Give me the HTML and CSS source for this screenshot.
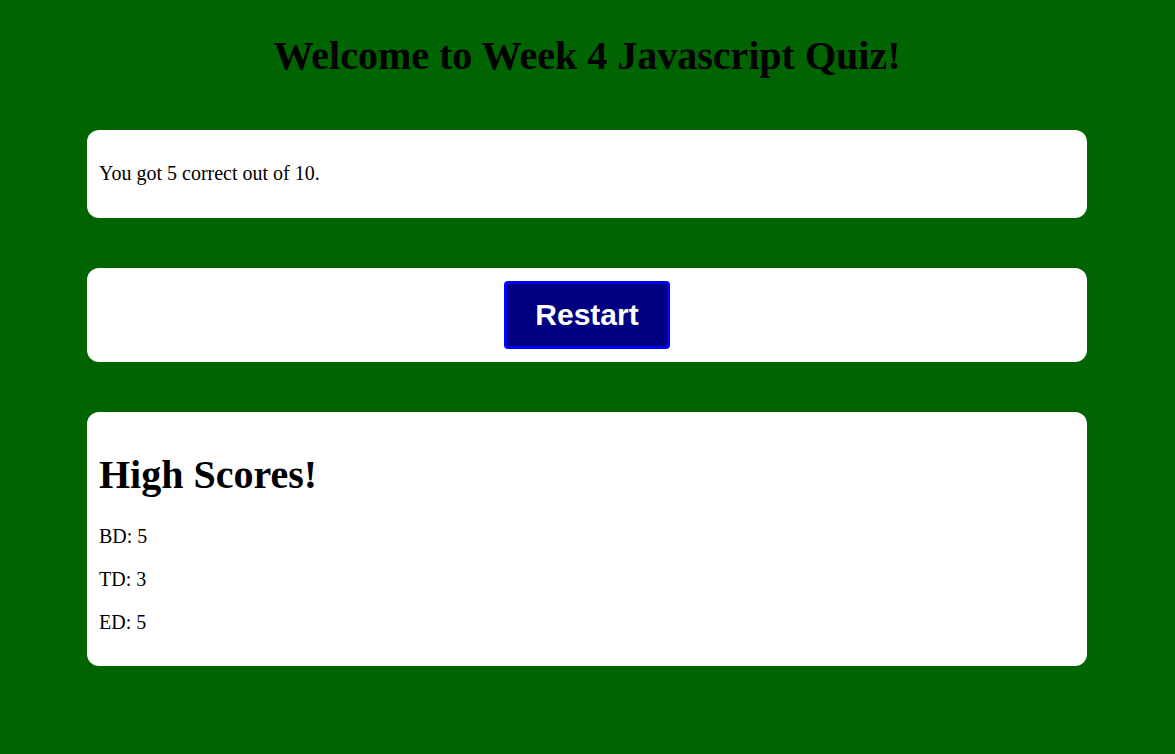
FILE: index.html
```html
<!DOCTYPE html>
<html>
<head>
<meta charset="utf-8">
<title>Week 4 Javascript Quiz</title>
<link rel="stylesheet" href="styles.css">
</head>
<body>
  <h1 class="title">Welcome to Week 4 Javascript Quiz!</h1>
  <main class="quiz">
    <section class="card card-result">
      <p class="text">You got 5 correct out of 10.</p>
    </section>
    <section class="card card-actions">
      <button class="btn">Restart</button>
    </section>
    <section class="card">
      <h2 class="scores-title">High Scores!</h2>
      <p class="text">BD: 5</p>
      <p class="text">TD: 3</p>
      <p class="text">ED: 5</p>
    </section>
  </main>
</body>
</html>
```

FILE: styles.css
```css
html, body {
  background: #006400;
}
body {
  margin: 0;
  padding: 5px 1px 40px 0;
  font-family: "Liberation Serif", "Times New Roman", serif;
  font-size: 20px;
  color: #000;
}
.title {
  font-size: 40px;
  font-weight: bold;
  text-align: center;
  margin: 27px 0 0;
}
.quiz {
  width: 1000px;
  margin: 0 auto;
  display: flex;
  flex-direction: column;
  gap: 50px;
  padding-top: 51px;
}
.card {
  background: #fff;
  border-radius: 12px;
  padding: 12px;
}
.card-result {
  padding-bottom: 13px;
}
.text {
  margin: 20px 0;
}
.card-actions {
  padding: 13px 12px;
  display: flex;
  justify-content: center;
}
.btn {
  font-family: "Liberation Sans", Arial, sans-serif;
  font-size: 30px;
  font-weight: bold;
  color: #fff;
  background: #000080;
  border: 3px solid #0000ff;
  border-radius: 4px;
  padding: 14px 28px;
  line-height: 34px;
  cursor: pointer;
}
.scores-title {
  font-size: 40px;
  font-weight: bold;
  margin: 27px 0;
}
```
